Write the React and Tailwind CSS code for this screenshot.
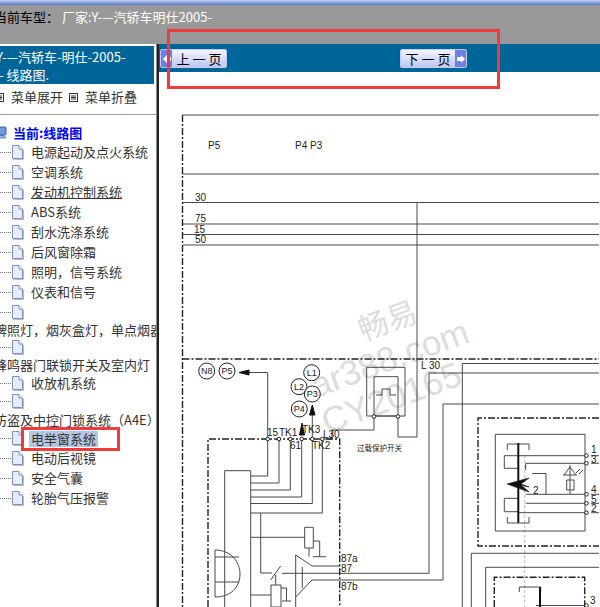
import React from "react";

const cjk = { fontFamily: '"Noto Sans CJK SC", "Liberation Sans", sans-serif' };

const rows = [
  { t: "电源起动及点火系统", h: "h-[20px]", icon: true },
  { t: "空调系统", h: "h-[20px]", icon: true },
  { t: "发动机控制系统", h: "h-[20px]", icon: true, u: true },
  { t: "ABS系统", h: "h-[20px]", icon: true },
  { t: "刮水洗涤系统", h: "h-[20px]", icon: true },
  { t: "后风窗除霜", h: "h-[20px]", icon: true },
  { t: "照明，信号系统", h: "h-[20px]", icon: true },
  { t: "仪表和信号", h: "h-[20px]", icon: true },
  { t: "", h: "h-[20px]", icon: true },
  { t: "牌照灯，烟灰盒灯，单点烟器", h: "h-[16px]", wide: true },
  { t: "", h: "h-[18px]", icon: true },
  { t: "蜂鸣器门联锁开关及室内灯", h: "h-[18px]", wide: true },
  { t: "收放机系统", h: "h-[18px]", icon: true },
  { t: "", h: "h-[18px]", icon: true },
  { t: "防盗及中控门锁系统（A4E）", h: "h-[19px]", wide: true },
  { t: "电举窗系统", h: "h-[19px]", icon: true, sel: true },
  { t: "电动后视镜", h: "h-[20px]", icon: true },
  { t: "安全气囊", h: "h-[20px]", icon: true },
  { t: "轮胎气压报警", h: "h-[20px]", icon: true },
];

function DocIcon() {
  return (
    <svg width="13" height="15" viewBox="0 0 13 15" className="shrink-0">
      <path d="M1.5 0.5H8L11.5 4V13.5H1.5Z" fill="#e4edfb" stroke="#7f8fc0" />
      <path d="M8 0.5V4H11.5" fill="#fff" stroke="#7f8fc0" />
      <path d="M2.5 14.5H12.5V5" fill="none" stroke="#b9b9c4" />
    </svg>
  );
}

function BoxIcon() {
  return (
    <svg width="9" height="9" viewBox="0 0 9 9" className="shrink-0">
      <rect x="0.5" y="0.5" width="8" height="8" fill="#fff" stroke="#333" />
      <path d="M2 3H7M2 4.5H7M2 6H7" stroke="#333" />
    </svg>
  );
}

function NavButton({ label, dir }) {
  const arrow = (
    <span className="flex h-full w-[11px] items-center justify-center bg-[#6d7fe0]">
      <svg width="8" height="8" viewBox="0 0 8 8">
        {dir === "left" ? (
          <path d="M0 4L4 0V2H8V6H4V8Z" fill="#fff" />
        ) : (
          <path d="M8 4L4 0V2H0V6H4V8Z" fill="#fff" />
        )}
      </svg>
    </span>
  );
  return (
    <div className="flex h-[19px] w-[67px] items-stretch overflow-hidden rounded-[2px] border border-[#c4cbf0] bg-gradient-to-b from-[#f4f5ff] to-[#bcc6f4] text-[13px] leading-[17px] text-black" style={cjk}>
      {dir === "left" && arrow}
      <span className="flex-1 text-center whitespace-pre">{label}</span>
      {dir === "right" && arrow}
    </div>
  );
}

const wires = [
  "M183.5 115H600", "M183.5 174H600", "M183.5 202.5H600", "M183.5 224H600", "M183.5 234.5H600", "M183.5 245H600",
  "M418 202.5V437H399V416",
  "M252 476H268.7V372.5H250", "M252 483H280V439", "M252 490H291.3V439", "M252 497H302.7V439", "M252 503.5H313.3V415", "M252 513H323.3V439",
  "M375 416V430H333V439H323",
  "M367.7 367.3H406V416H367.7Z", "M375 376.7H399V416H375Z",
  "M377 395H383V389H391V395H397",
  "M225.7 607V470.7H251.7V607",
  "M216 550C232 550 241 562 241 574C241 587 232 597 216 597ZM216 557H240M216 582H240",
  "M261.7 513V573H273", "M271.7 580L281.7 566M276.7 575V585", "M272 585H282V607H272Z", "M282 588H287.5V601M283 601H292",
  "M252 537.3H305.7", "M305.7 527.3H314.3V548H305.7Z", "M314.3 541H320.7V556.7M314 556.7H327", "M310 548V556.7",
  "M252 595H272",
  "M296.7 555V607M296.7 555L313 566H341M296.7 597L313 580M303.3 567V588",
  "M283 573.3H430V373H600", "M313 580H444V404H600",
  "M463.3 607V363.5H600",
  "M496.3 434.3H586V531H496.3Z",
  "M505.3 455.7H587M505.3 455.7V468.3H519.3", "M526.7 463.3H587M526.7 463.3V470",
  "M505.3 498.3V511.7H519.3M505.3 498.3H519.3", "M526.7 503.3H587", "M519.3 512.7H587", "M526.7 494.3H587",
  "M533.3 473.5H547V494.3",
  "M508.3 450V444H530V450", "M508.3 517V523H530V517",
  "M571 465V494.3M564 475H578M571 467L565 475M571 467L577 475M567.7 480H575V490H567.7Z", "M577 473L581 469M580 474L584 470",
  "M592 455.7H600M592 463.3H600M592 494.3H600M592 503.3H600M592 512.7H600",
  "M472.3 607V553.3H600", "M486.7 607V567.3H600",
  "M520.3 592V587H541.7V592", "M537 605.5H587",
];

const dashed = [
  "M183.5 115V607", "M183.5 359H600",
  "M209 607V439H340.7V607",
  "M600 418H479V546H600",
  "M495.3 607V577.3H585.7V607",
];

const circles = [
  [207.7, 371, "N8"], [228, 371, "P5"], [312.7, 372.7, "L1"], [300, 386.7, "L2"], [313.3, 394, "P3"], [300.3, 409, "P4"],
];

const labels = [
  [209, 149, "P5"], [296, 149, "P4 P3"], [196, 201, "30"], [196, 222, "75"], [195, 233, "15"], [196, 243, "50"],
  [268, 436, "15"], [280, 436, "TK1"], [291, 449, "61"], [303, 433, "TK3"], [313, 449, "TK2"], [324, 438, "L30"],
  [422, 369, "L 30"], [342, 562, "87a"], [342, 572, "87"], [342, 590, "87b"],
  [592, 453, "1"], [592, 463, "3"], [592, 493, "4"], [592, 503, "5"], [592, 512, "2"], [534, 494, "2"], [591, 604, "3"],
];

function Diagram() {
  return (
    <svg viewBox="160 72 440 535" className="block h-[535px] w-[440px]">
      <g fill="#dcdcdc" style={{ fontFamily: '"Liberation Sans", sans-serif' }}>
        <text x="364" y="341" fontSize="30" transform="rotate(-20 364 341)" style={cjk}>畅易</text>
        <text x="317" y="398" fontSize="35" transform="rotate(-20 317 398)">ar388.com</text>
        <text x="328" y="434" fontSize="35" transform="rotate(-20 328 434)">CY20165</text>
      </g>
      <path d="M525.7 455V607" stroke="#bbb" strokeDasharray="3 2" fill="none" />
      <g fill="none" stroke="#2a2a2a" strokeWidth="1" opacity="0.85">
        {wires.map((d) => <path key={d} d={d} />)}
      </g>
      <g fill="none" stroke="#222" strokeWidth="1.4" strokeDasharray="7 2 2 2">
        {dashed.map((d) => <path key={d} d={d} />)}
      </g>
      <path d="M519.3 443V522.7" stroke="#111" strokeWidth="2" />
      <path d="M541 587V607" stroke="#111" strokeWidth="2" />
      <path d="M508 484L530 478L522 484L530 487L522 485L530 492Z" fill="#111" stroke="#111" strokeWidth="0.6" />
      <path d="M240 372.5L250 370V375Z" fill="#111" stroke="#111" />
      <path d="M313.3 405L310.5 415H316Z" fill="#111" stroke="#111" />
      <path d="M303 423L300.5 435H305.5Z" fill="#111" stroke="#111" />
      <g fill="#fff" stroke="#222">
        {[268.7, 280, 291.3, 302.7, 313.3, 323.3].map((x) => <circle key={x} cx={x} cy="439" r="1.8" />)}
        {[[375, 416.5], [399, 416.5], [587.5, 455.7], [587.5, 463.3], [587.5, 494.3], [587.5, 503.3], [587.5, 512.7], [587.5, 605.5]].map(([x, y]) => (
          <circle key={`${x}-${y}`} cx={x} cy={y} r="1.8" />
        ))}
      </g>
      <g style={{ fontFamily: '"Liberation Sans", sans-serif' }} fontSize="9" textAnchor="middle">
        {circles.map(([x, y, t]) => (
          <g key={t}>
            <circle cx={x} cy={y} r="8" fill="#fff" fillOpacity="0.6" stroke="#222" />
            <text x={x} y={y + 3.2} fill="#222">{t}</text>
          </g>
        ))}
      </g>
      <g style={{ fontFamily: '"Liberation Sans", sans-serif' }} fontSize="10" fill="#222">
        {labels.map(([x, y, t]) => <text key={`${x}${y}`} x={x} y={y}>{t}</text>)}
      </g>
      <text x="358" y="451" fontSize="7.5" fill="#222" style={cjk}>过载保护开关</text>
    </svg>
  );
}

export default function App() {
  return (
    <div className="relative flex h-[607px] w-[600px] flex-col overflow-hidden bg-white" style={cjk}>
      <div className="h-[5px] bg-gradient-to-b from-[#c5d2f0] to-[#5577c8]" />
      <div className="h-[39px] overflow-hidden whitespace-pre bg-[#999999] pt-[2px] text-[13px] leading-[20px] text-white">
        <span className="-ml-[6px] inline-block text-black">当前车型： </span>
        <span>厂家:Y-—汽轿车明仕2005-</span>
      </div>

      <div className="flex min-h-0 flex-1">
        <aside className="flex w-[157px] shrink-0 flex-col overflow-hidden border-r border-[#8a8a8a] pt-[2px] text-[13px] text-[#333]">
          <div className="h-[38px] w-[154px] shrink-0 overflow-hidden whitespace-pre bg-[#006699] pt-[2px] leading-[18px] text-white">
            <div className="-ml-[4px]">Y-—汽轿车-明仕-2005-</div>
            <div className="-ml-[1px]">- 线路图.</div>
          </div>
          <div className="flex h-[31px] shrink-0 items-center border-b border-[#9a9a9a] pb-[5px] pt-[1px]">
            <span className="-ml-[5px] mr-[7px]"><BoxIcon /></span>
            <span className="mr-[7px] w-[51px] shrink-0 whitespace-nowrap">菜单展开</span>
            <span className="mr-[7px]"><BoxIcon /></span>
            <span className="whitespace-nowrap">菜单折叠</span>
          </div>
          <div className="flex h-[27px] shrink-0 items-center pt-[8px]">
            <svg width="14" height="14" viewBox="0 0 14 14" className="-ml-[6px] mr-[5px] shrink-0">
              <rect x="2" y="1" width="10" height="8" rx="1" fill="#6f9ae0" stroke="#3c5ea8" />
              <path d="M4 12H12L10 9.500H6Z" fill="#9cb6e6" stroke="#3c5ea8" strokeWidth="0.7" />
            </svg>
            <span className="font-bold text-[#0000ff]">当前:线路图</span>
          </div>
          {rows.map((r, i) =>
            r.wide ? (
              <div key={i} className={`${r.h} -ml-[6px] flex shrink-0 items-center whitespace-nowrap`}>{r.t}</div>
            ) : (
              <div key={i} className={`${r.h} flex shrink-0 items-center`}>
                <span className="w-[11px] shrink-0 border-t border-dotted border-[#777]" />
                <DocIcon />
                {r.t && (
                  <span
                    className={
                      r.sel
                        ? "ml-[5px] bg-[#b5c6e4] px-[2px] leading-[16px] whitespace-nowrap"
                        : r.u
                          ? "ml-[7px] whitespace-nowrap underline"
                          : "ml-[7px] whitespace-nowrap"
                    }
                  >
                    {r.t}
                  </span>
                )}
              </div>
            )
          )}
        </aside>
        <div className="w-[2px] shrink-0 bg-[#222]" />
        <main className="flex min-w-0 flex-1 flex-col">
          <div className="flex h-[28px] shrink-0 items-center gap-[173px] bg-[#006699] pl-[1px] pt-[1px]">
            <NavButton label="上 一 页" dir="left" />
            <NavButton label="下 一 页" dir="right" />
          </div>
          <Diagram />
        </main>
      </div>

      <div className="pointer-events-none absolute left-[167px] top-[29px] h-[60px] w-[333px] border-[3px] border-[#f23a3c]" />
      <div className="pointer-events-none absolute left-[21px] top-[427px] h-[24px] w-[99px] border-[3px] border-[#f23a3c]" />
    </div>
  );
}
